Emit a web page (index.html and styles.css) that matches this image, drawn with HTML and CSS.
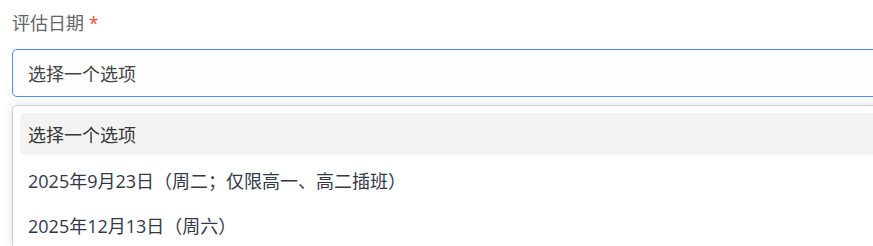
FILE: index.html
```html
<!DOCTYPE html>
<html lang="zh-CN">
<head>
<meta charset="utf-8">
<title>评估日期</title>
<link rel="stylesheet" href="styles.css">
</head>
<body>
<div class="field">
  <label class="field-label">评估日期 <span class="req">*</span></label>
  <div class="select-box">选择一个选项</div>
  <ul class="dropdown">
    <li class="option active">选择一个选项</li>
    <li class="option">2025年9月23日（周二；仅限高一、高二插班）</li>
    <li class="option">2025年12月13日（周六）</li>
  </ul>
</div>
</body>
</html>
```
FILE: styles.css
```css
html, body {
  margin: 0;
  padding: 0;
  background: #ffffff;
  overflow: hidden;
}
body {
  font-family: "Open Sans", "Noto Sans CJK SC", sans-serif;
  font-size: 18px;
}
.field {
  padding: 10px 0 0 12px;
  width: 940px;
}
.field-label {
  display: block;
  line-height: 26px;
  color: #666666;
  margin-bottom: 13px;
}
.req {
  color: #e5534b;
}
.select-box {
  box-sizing: border-box;
  height: 48px;
  width: 920px;
  border: 1px solid #4a8ef2;
  border-radius: 5px;
  background: #fdfdfd;
  box-shadow: inset 0 2px 3px rgba(0,0,0,0.03);
  display: flex;
  align-items: center;
  padding-left: 15px;
  color: #444444;
}
.dropdown {
  list-style: none;
  margin: 8px 0 0 0;
  padding: 7px 7px 3px 7px;
  width: 920px;
  box-sizing: border-box;
  border: 1px solid #cfcfcf;
  border-radius: 5px;
  background: #ffffff;
  box-shadow: 0 0 10px rgba(0,0,0,0.12);
  display: flex;
  flex-direction: column;
  gap: 4px;
}
.option {
  height: 42px;
  display: flex;
  align-items: center;
  padding-left: 8px;
  border-radius: 5px;
  color: #333848;
}
.option:last-child {
  height: 40px;
}
.option.active {
  background: #f3f3f3;
  color: #363636;
}
```
